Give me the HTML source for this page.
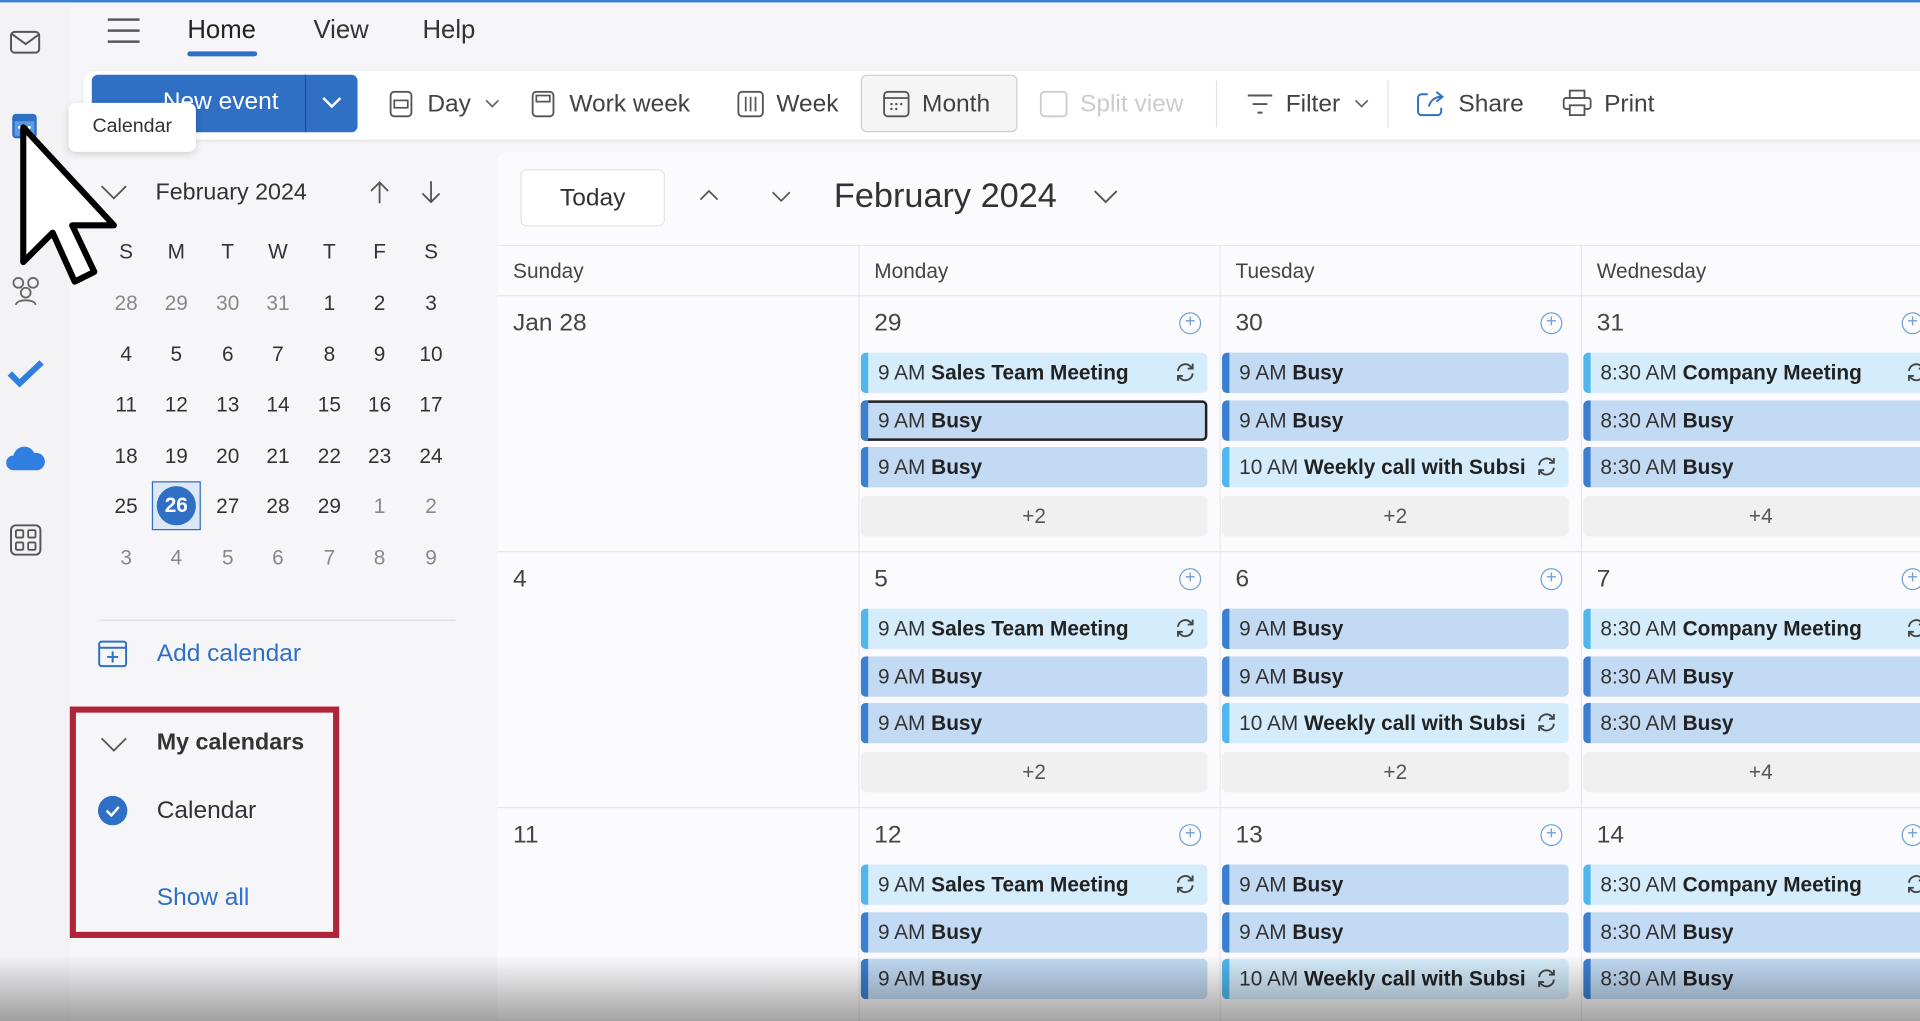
<!DOCTYPE html>
<html><head><meta charset="utf-8"><style>
*{box-sizing:border-box;margin:0;padding:0}
body{width:1920px;height:1021px;overflow:hidden;background:#f5f5f7;font-family:"Liberation Sans",sans-serif;color:#242424}
#s{position:absolute;left:0;top:0;width:1568px;height:834px;transform:scale(1.22449);transform-origin:0 0;background:#f6f6f8;overflow:hidden}
.a{position:absolute}
.t{font-size:20px;color:#424242}
.tb{font-size:20px;color:#333}
.ev{position:absolute;height:33px;border-radius:4px;font-size:17px;line-height:33px;padding-left:14px;white-space:nowrap;overflow:hidden;color:#333}
.ev b{color:#222;font-weight:bold}
.ev:before{content:"";position:absolute;left:0;top:0;bottom:0;width:6px;border-radius:4px 0 0 4px}
.l{background:#d4ecfb}.l:before{background:#4fb6ee}
.d{background:#c2daf3}.d:before{background:#3a7fd0}
.more{position:absolute;height:33px;background:#f0f0f0;border-radius:4px;text-align:center;line-height:33px;font-size:17px;color:#555}
.num{position:absolute;font-size:20px;color:#444}
.plus{position:absolute;width:18px;height:18px;border:1.5px solid #6fa0d6;border-radius:50%;color:#6fa0d6;font-size:15px;line-height:14px;text-align:center}
.mini{position:absolute;font-size:17px;color:#333;width:30px;text-align:center}
.g{color:#888}
</style></head><body><div id="s">
<div class="a" style="left:0;top:0;width:1568px;height:2px;background:#3a7fd0"></div>
<!-- rail -->
<div class="a" style="left:0;top:2px;width:58px;height:832px;background:#f3f3f5"></div>
<svg class="a" style="left:8px;top:24px" width="26" height="22"><rect x="1" y="2" width="23" height="17" rx="3" fill="none" stroke="#555" stroke-width="1.6"/><path d="M2 4l11 8 11-8" fill="none" stroke="#555" stroke-width="1.6"/></svg>
<svg class="a" style="left:9px;top:92px" width="22" height="22"><rect x="1" y="1" width="20" height="20" rx="3" fill="#2f6fc4"/><rect x="3" y="7" width="16" height="12" fill="#5a9be6"/><circle cx="7" cy="12" r="1.2" fill="#fff"/><circle cx="11" cy="12" r="1.2" fill="#fff"/><circle cx="15" cy="12" r="1.2" fill="#fff"/></svg>
<svg class="a" style="left:7px;top:225px" width="28" height="26"><circle cx="8" cy="6" r="4" fill="none" stroke="#666" stroke-width="1.5"/><circle cx="20" cy="6" r="4" fill="none" stroke="#666" stroke-width="1.5"/><circle cx="14" cy="14" r="4" fill="none" stroke="#666" stroke-width="1.5"/><path d="M6 24c0-5 16-5 16 0" fill="none" stroke="#666" stroke-width="1.5"/></svg>
<svg class="a" style="left:6px;top:293px" width="30" height="24"><path d="M2 12l8 8L28 3" fill="none" stroke="#2f7ee0" stroke-width="5"/></svg>
<svg class="a" style="left:5px;top:364px" width="32" height="22"><path d="M6 20a6 6 0 010-12 9 9 0 0117-2 7 7 0 013 14z" fill="#2f7ee0"/></svg>
<svg class="a" style="left:8px;top:428px" width="26" height="26"><rect x="1" y="1" width="24" height="24" rx="4" fill="none" stroke="#555" stroke-width="1.6"/><rect x="5" y="5" width="6" height="6" rx="1" fill="none" stroke="#555" stroke-width="1.5"/><rect x="15" y="5" width="6" height="6" rx="1" fill="none" stroke="#555" stroke-width="1.5"/><rect x="5" y="15" width="6" height="6" rx="1" fill="none" stroke="#555" stroke-width="1.5"/><rect x="15" y="15" width="6" height="6" rx="1" fill="none" stroke="#555" stroke-width="1.5"/></svg>
<!-- tabs -->
<div class="a" style="left:88px;top:15px;width:26px;height:20px;border-top:2px solid #555;border-bottom:2px solid #555"><div style="margin-top:7px;border-top:2px solid #555"></div></div>
<div class="a tb" style="left:153px;top:13px;font-size:21px;color:#222">Home</div>
<div class="a" style="left:153px;top:42px;width:57px;height:4px;background:#2f6fc4;border-radius:2px"></div>
<div class="a tb" style="left:256px;top:13px;font-size:21px">View</div>
<div class="a tb" style="left:345px;top:13px;font-size:21px">Help</div>
<!-- toolbar -->
<div class="a" style="left:68px;top:58px;width:1510px;height:56px;background:#fff;border-radius:8px;box-shadow:0 1px 3px rgba(0,0,0,.08)"></div>
<div class="a" style="left:75px;top:61px;width:217px;height:47px;background:#2f6fc4;border-radius:5px"></div>
<div class="a" style="left:249px;top:61px;width:1px;height:47px;background:#1d4f96"></div>
<div class="a" style="left:133px;top:72px;color:#fff;font-size:20px">New event</div>
<svg class="a" style="left:262px;top:78px" width="18" height="12"><path d="M2 2l7 7 7-7" fill="none" stroke="#fff" stroke-width="2"/></svg>
<svg class="a" style="left:318px;top:74px" width="20" height="22"><rect x="1" y="1" width="17" height="20" rx="3" fill="none" stroke="#555" stroke-width="1.5"/><rect x="4" y="8" width="11" height="6" fill="none" stroke="#555" stroke-width="1.4"/></svg>
<div class="a t" style="left:349px;top:74px">Day</div>
<svg class="a" style="left:396px;top:81px" width="12" height="8"><path d="M1 1l5 5 5-5" fill="none" stroke="#666" stroke-width="1.4"/></svg>
<svg class="a" style="left:434px;top:74px" width="20" height="22"><rect x="1" y="1" width="17" height="20" rx="3" fill="none" stroke="#555" stroke-width="1.5"/><rect x="4" y="4" width="11" height="5" fill="none" stroke="#555" stroke-width="1.4"/></svg>
<div class="a t" style="left:465px;top:74px">Work week</div>
<svg class="a" style="left:602px;top:74px" width="22" height="22"><rect x="1" y="1" width="20" height="20" rx="3" fill="none" stroke="#555" stroke-width="1.5"/><path d="M7 5v12M11 5v12M15 5v12" stroke="#555" stroke-width="1.4"/></svg>
<div class="a t" style="left:634px;top:74px">Week</div>
<div class="a" style="left:703px;top:61px;width:128px;height:47px;border:1px solid #ccc;border-radius:5px;background:#f5f5f5"></div>
<svg class="a" style="left:721px;top:74px" width="22" height="22"><rect x="1" y="1" width="20" height="20" rx="3" fill="none" stroke="#555" stroke-width="1.5"/><path d="M1 6h20" stroke="#555" stroke-width="1.4"/><circle cx="7" cy="11" r="1" fill="#555"/><circle cx="11" cy="11" r="1" fill="#555"/><circle cx="15" cy="11" r="1" fill="#555"/><circle cx="7" cy="15" r="1" fill="#555"/><circle cx="11" cy="15" r="1" fill="#555"/></svg>
<div class="a t" style="left:753px;top:74px">Month</div>
<svg class="a" style="left:849px;top:74px" width="24" height="22"><rect x="1" y="1" width="21" height="20" rx="3" fill="none" stroke="#ccc" stroke-width="1.5"/></svg>
<div class="a t" style="left:882px;top:74px;color:#ccc">Split view</div>
<div class="a" style="left:993px;top:66px;width:1px;height:38px;background:#e2e2e2"></div>
<svg class="a" style="left:1018px;top:76px" width="22" height="18"><path d="M1 2h20M5 9h12M9 16h4" stroke="#555" stroke-width="1.6"/></svg>
<div class="a t" style="left:1050px;top:74px">Filter</div>
<svg class="a" style="left:1106px;top:81px" width="12" height="8"><path d="M1 1l5 5 5-5" fill="none" stroke="#666" stroke-width="1.4"/></svg>
<div class="a" style="left:1133px;top:66px;width:1px;height:38px;background:#e2e2e2"></div>
<svg class="a" style="left:1157px;top:73px" width="24" height="22"><path d="M9 4H4a3 3 0 00-3 3v11a3 3 0 003 3h13a3 3 0 003-3v-3" fill="none" stroke="#2f6fc4" stroke-width="1.6"/><path d="M10 14c1-5 5-8 10-8M16 2l5 4-5 4" fill="none" stroke="#2f6fc4" stroke-width="1.6"/></svg>
<div class="a t" style="left:1191px;top:74px">Share</div>
<svg class="a" style="left:1276px;top:73px" width="24" height="22"><rect x="6" y="1" width="12" height="6" fill="none" stroke="#555" stroke-width="1.5"/><rect x="1" y="7" width="22" height="9" rx="2" fill="none" stroke="#555" stroke-width="1.5"/><rect x="6" y="13" width="12" height="8" fill="#fff" stroke="#555" stroke-width="1.5"/></svg>
<div class="a t" style="left:1310px;top:74px">Print</div>
<!-- tooltip -->
<div class="a" style="left:56px;top:84px;width:104px;height:40px;background:#fff;border-radius:6px;box-shadow:0 2px 6px rgba(0,0,0,.15);font-size:16px;line-height:40px;text-align:center;color:#333">Calendar</div>
<!-- mini calendar -->
<svg class="a" style="left:82px;top:150px" width="22" height="14"><path d="M1 2l10 10 10-10" fill="none" stroke="#555" stroke-width="1.5"/></svg>
<div class="a" style="left:127px;top:147px;font-size:19px;color:#333">February 2024</div>
<svg class="a" style="left:301px;top:147px" width="18" height="20"><path d="M9 19V2M2 9l7-7 7 7" fill="none" stroke="#555" stroke-width="1.5"/></svg>
<svg class="a" style="left:343px;top:147px" width="18" height="20"><path d="M9 1v17M2 11l7 7 7-7" fill="none" stroke="#555" stroke-width="1.5"/></svg>
<div id="mini"></div>
<div class="a" style="left:124px;top:393px;width:40px;height:40px;border:1px solid #2f6fc4;background:#dde8f6"></div>
<div class="a" style="left:128px;top:397px;width:32px;height:32px;border-radius:50%;background:#2f6fc4;color:#fff;font-weight:bold;font-size:17px;line-height:32px;text-align:center">26</div>
<div class="a" style="left:82px;top:506px;width:290px;height:1px;background:#ddd"></div>
<svg class="a" style="left:80px;top:522px" width="24" height="24"><rect x="1" y="2" width="22" height="20" rx="2" fill="none" stroke="#2f6fc4" stroke-width="1.6"/><path d="M1 7h22M12 10v9M7.5 14.5h9" stroke="#2f6fc4" stroke-width="1.6"/></svg>
<div class="a" style="left:128px;top:523px;font-size:20px;color:#2f6fc4">Add calendar</div>
<div class="a" style="left:57px;top:577px;width:220px;height:189px;border:5px solid #b0243a"></div>
<svg class="a" style="left:82px;top:601px" width="22" height="14"><path d="M1 2l10 10 10-10" fill="none" stroke="#555" stroke-width="1.5"/></svg>
<div class="a" style="left:128px;top:596px;font-size:19px;font-weight:bold;color:#333">My calendars</div>
<div class="a" style="left:80px;top:650px;width:24px;height:24px;border-radius:50%;background:#2f6fc4"></div>
<svg class="a" style="left:80px;top:650px" width="24" height="24"><path d="M7 12l4 4 6-7" fill="none" stroke="#fff" stroke-width="2"/></svg>
<div class="a" style="left:128px;top:651px;font-size:20px;color:#333">Calendar</div>
<div class="a" style="left:128px;top:722px;font-size:20px;color:#2f6fc4">Show all</div>
<!-- cursor -->
<svg class="a" style="left:14px;top:100px" width="90" height="135"><path d="M5 4v110l24-24 18 40 16-8-18-38h34z" fill="#fff" stroke="#000" stroke-width="5" stroke-linejoin="round"/></svg>
<!-- main grid -->
<div class="a" style="left:406px;top:124px;width:1170px;height:720px;background:#fbfbfd;border-radius:8px 0 0 0"></div>
<div class="a" style="left:425px;top:138px;width:118px;height:47px;border:1px solid #e4e4e4;border-radius:5px;background:#fff;text-align:center;line-height:47px;font-size:20px;color:#333">Today</div>
<svg class="a" style="left:571px;top:155px" width="16" height="10"><path d="M1 8l7-7 7 7" fill="none" stroke="#555" stroke-width="1.4"/></svg>
<svg class="a" style="left:630px;top:156px" width="16" height="10"><path d="M1 1l7 7 7-7" fill="none" stroke="#555" stroke-width="1.4"/></svg>
<div class="a" style="left:681px;top:144px;font-size:28px;color:#333">February 2024</div>
<svg class="a" style="left:893px;top:155px" width="20" height="12"><path d="M1 1l9 9 9-9" fill="none" stroke="#555" stroke-width="1.6"/></svg>
<div class="a" style="left:406px;top:200px;width:1170px;height:1px;background:#e8e8e8"></div>
<div class="a" style="left:406px;top:241px;width:1170px;height:1px;background:#e8e8e8"></div>
<div class="a" style="left:406px;top:450px;width:1170px;height:1px;background:#e8e8e8"></div>
<div class="a" style="left:406px;top:659px;width:1170px;height:1px;background:#e8e8e8"></div>
<div class="a" style="left:701px;top:200px;width:1px;height:640px;background:#e8e8e8"></div>
<div class="a" style="left:996px;top:200px;width:1px;height:640px;background:#e8e8e8"></div>
<div class="a" style="left:1291px;top:200px;width:1px;height:640px;background:#e8e8e8"></div>
<div class="a" style="left:419px;top:212px;font-size:17px;color:#444">Sunday</div>
<div class="a" style="left:714px;top:212px;font-size:17px;color:#444">Monday</div>
<div class="a" style="left:1009px;top:212px;font-size:17px;color:#444">Tuesday</div>
<div class="a" style="left:1304px;top:212px;font-size:17px;color:#444">Wednesday</div>
<div id="g"></div>
<div class="a" style="left:0;top:780px;width:1568px;height:54px;background:linear-gradient(rgba(0,0,0,0),rgba(0,0,0,.35))"></div>
</div>
<script>
var m=document.getElementById('mini'),h='';
var xs=[103,144,186,227,269,310,352];
['S','M','T','W','T','F','S'].forEach((d,i)=>h+=`<div class="mini" style="left:${xs[i]-15}px;top:196px">${d}</div>`);
var rows=[[28,29,30,31,1,2,3],[4,5,6,7,8,9,10],[11,12,13,14,15,16,17],[18,19,20,21,22,23,24],[25,26,27,28,29,1,2],[3,4,5,6,7,8,9]];
rows.forEach((r,ri)=>r.forEach((n,i)=>{if(ri==4&&i==1)return;var g=(ri==0&&i<4)||(ri==4&&i>4)||ri==5;h+=`<div class="mini${g?' g':''}" style="left:${xs[i]-15}px;top:${238+ri*41.5}px">${n}</div>`}));
m.outerHTML=h;
var G=document.getElementById('g'),o='';
var R='<svg width="20" height="18" style="position:absolute;right:8px;top:7px"><path d="M4 8a6 6 0 0110-4l2 2M16 10a6 6 0 01-10 4l-2-2M16 2v4h-4M4 16v-4h4" fill="none" stroke="#444" stroke-width="1.5"/></svg>';
var nums=[['Jan 28','29','30','31'],['4','5','6','7'],['11','12','13','14']];
var cx=[407,702,997,1292];
for(var w=0;w<3;w++){var y=241+w*209;
 nums[w].forEach((n,i)=>{o+=`<div class="num" style="left:${cx[i]+12}px;top:${y+12}px">${n}</div>`;if(i>0)o+=`<div class="plus" style="left:${cx[i]+261}px;top:${y+14}px">+</div>`});
 var ev=[[['l','9 AM','Sales Team Meeting',1],['d','9 AM','Busy'],['d','9 AM','Busy']],[['d','9 AM','Busy'],['d','9 AM','Busy'],['l','10 AM','Weekly call with Subsi',1]],[['l','8:30 AM','Company Meeting',1],['d','8:30 AM','Busy'],['d','8:30 AM','Busy']]];
 ev.forEach((c,ci)=>{var x=cx[ci+1]+1;c.forEach((e,k)=>{var sel=(w==0&&ci==0&&k==1)?'outline:2.5px solid #222;outline-offset:-2px;':'';o+=`<div class="ev ${e[0]}" style="left:${x}px;top:${y+47+k*38.5}px;width:${ci==2?290:283}px;${sel}">${e[1]} <b>${e[2]}</b>${e[3]?R:''}</div>`});
 if(w<2)o+=`<div class="more" style="left:${x}px;top:${y+164}px;width:${ci==2?290:283}px">${ci==2?'+4':'+2'}</div>`;});
}
G.outerHTML=o;
</script>
</body></html>
